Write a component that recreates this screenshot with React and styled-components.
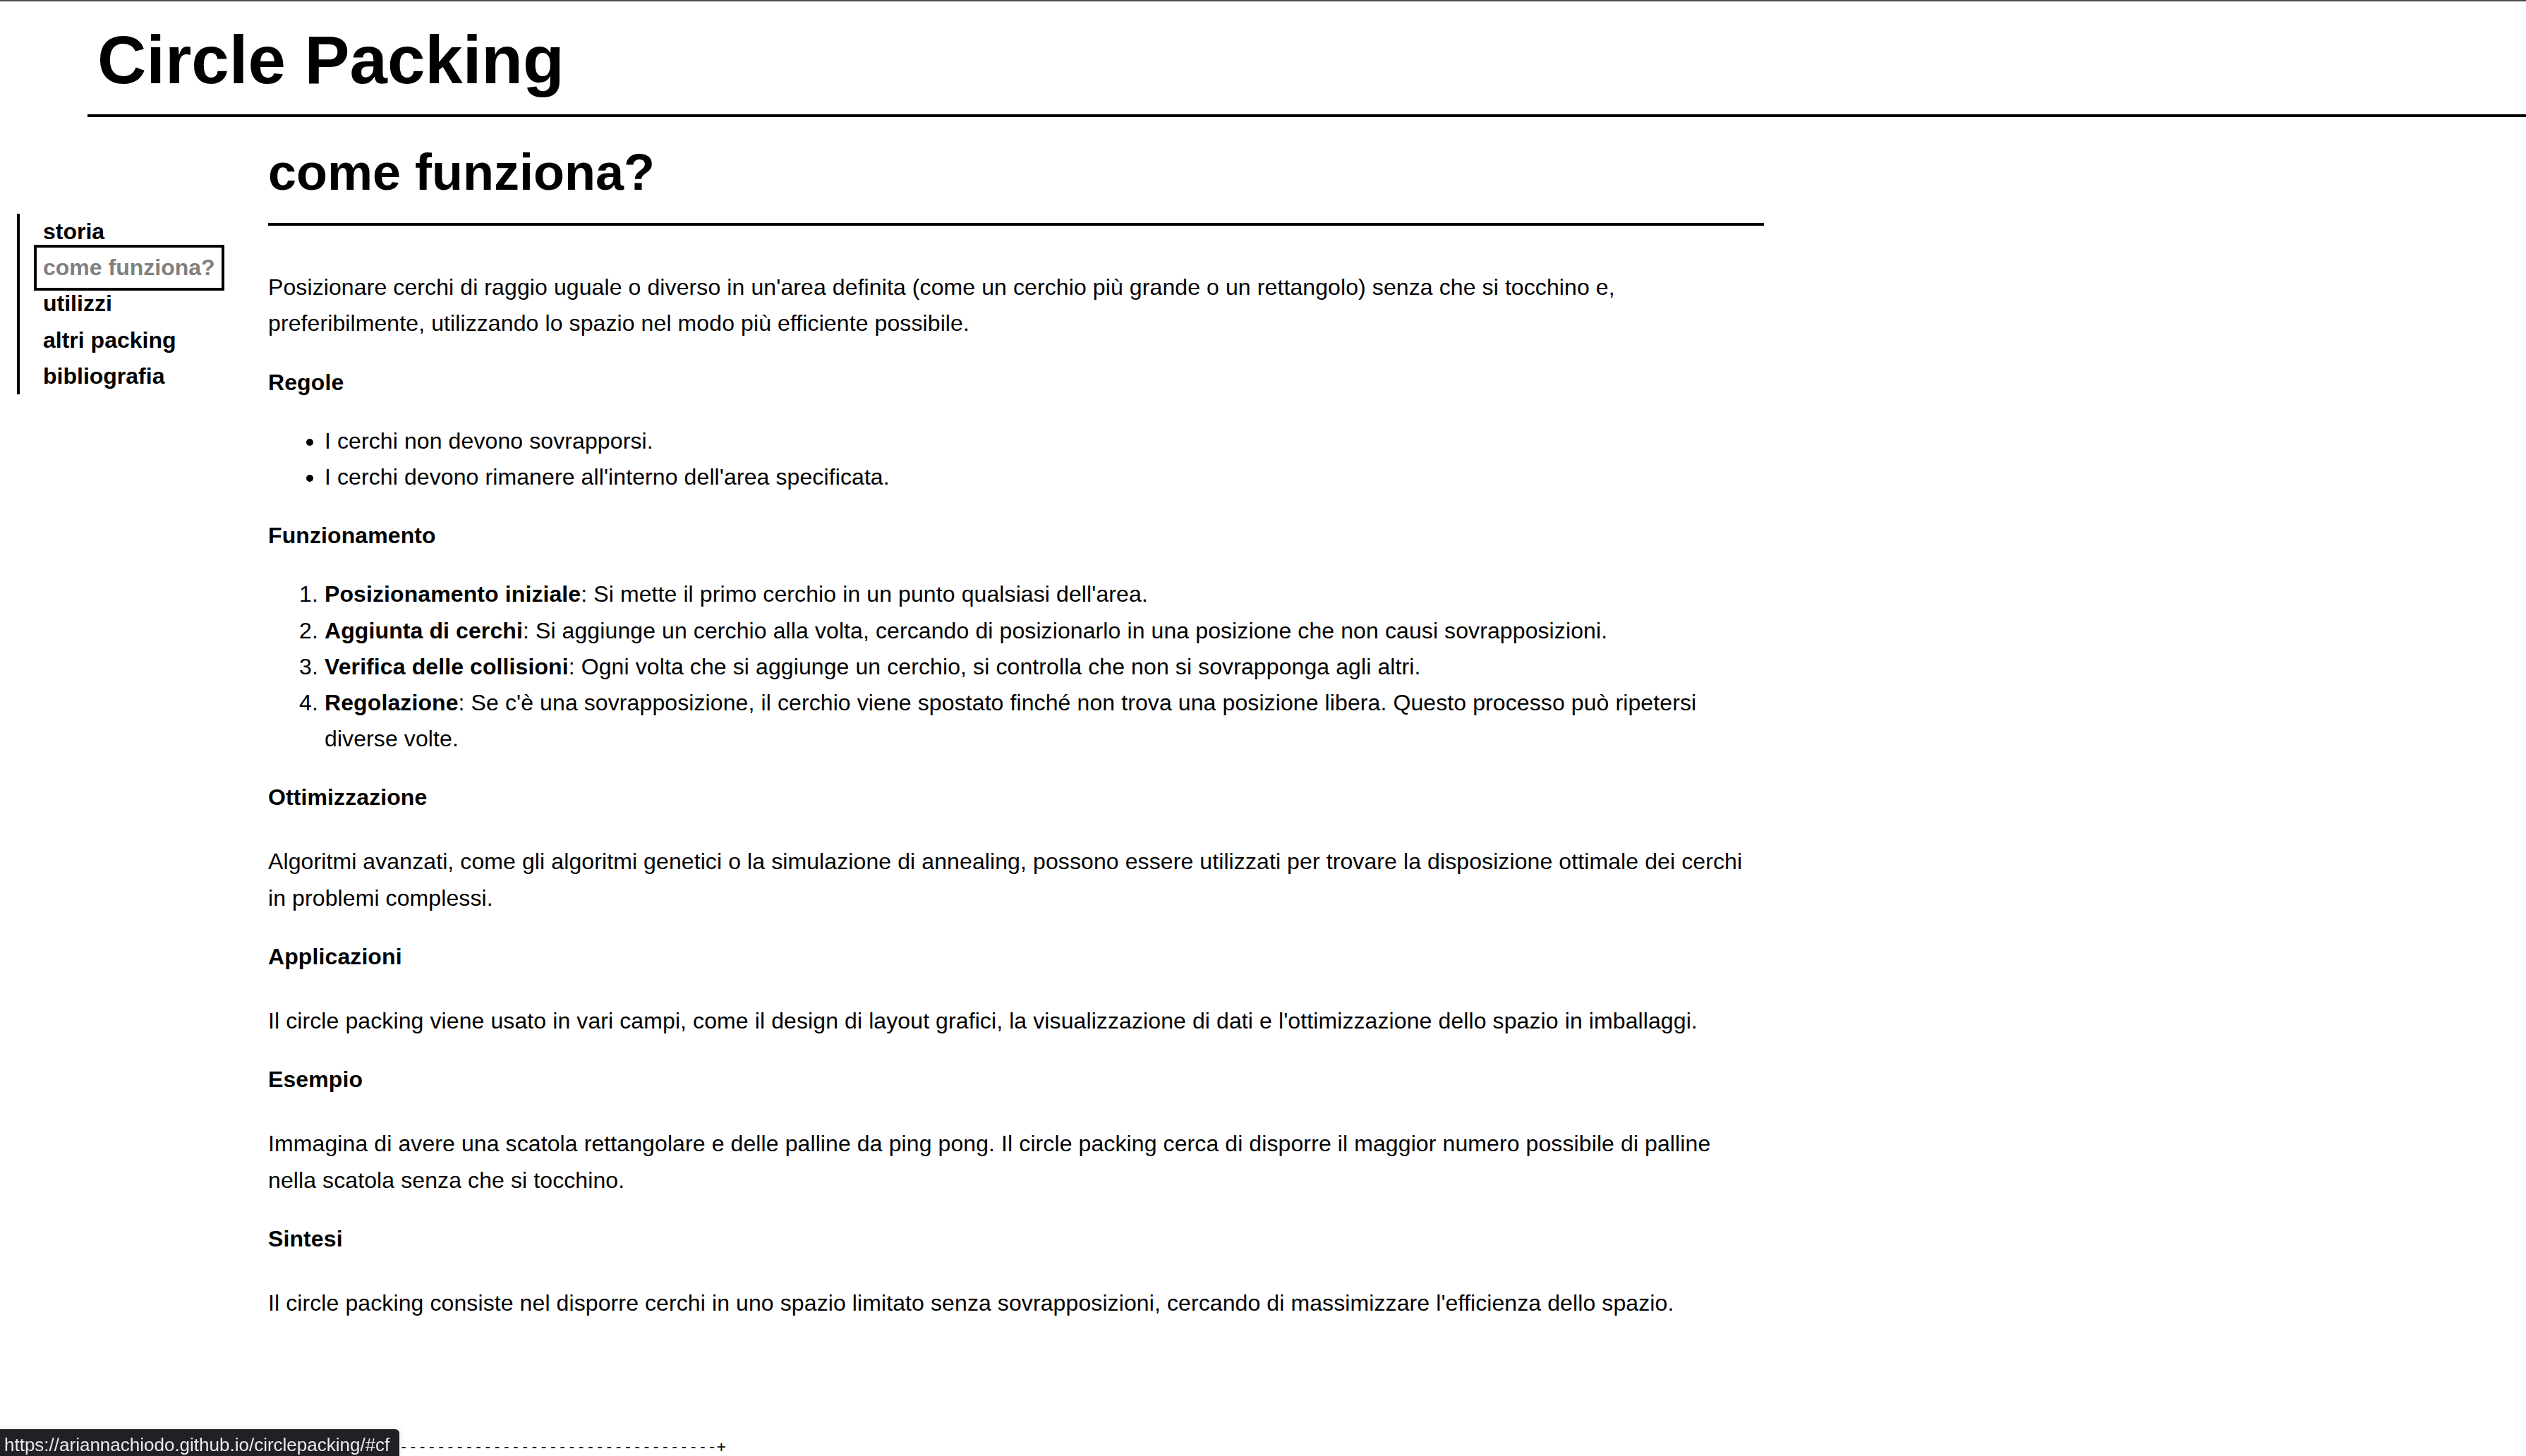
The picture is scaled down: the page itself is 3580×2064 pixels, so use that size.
import React from "react";
import styled, { createGlobalStyle } from "styled-components";

const GlobalStyle = createGlobalStyle`
  html, body {
    margin: 0;
    padding: 0;
    background: #fff;
  }
  body {
    font-family: "Liberation Sans", Arial, Helvetica, sans-serif;
    font-size: 32px;
    line-height: 1.6;
    color: #000;
  }
`;

const navItems = [
  { text: "storia", href: "#storia" },
  { text: "come funziona?", href: "#cf", active: true },
  { text: "utilizzi", href: "#utilizzi" },
  { text: "altri packing", href: "#altri" },
  { text: "bibliografia", href: "#bibliografia" },
];

const rules = [
  "I cerchi non devono sovrapporsi.",
  "I cerchi devono rimanere all'interno dell'area specificata.",
];

const steps = [
  {
    label: "Posizionamento iniziale",
    text: "Si mette il primo cerchio in un punto qualsiasi dell'area.",
  },
  {
    label: "Aggiunta di cerchi",
    text: "Si aggiunge un cerchio alla volta, cercando di posizionarlo in una posizione che non causi sovrapposizioni.",
  },
  {
    label: "Verifica delle collisioni",
    text: "Ogni volta che si aggiunge un cerchio, si controlla che non si sovrapponga agli altri.",
  },
  {
    label: "Regolazione",
    text: "Se c'è una sovrapposizione, il cerchio viene spostato finché non trova una posizione libera. Questo processo può ripetersi diverse volte.",
  },
];

function App() {
  return (
    <Page>
      <GlobalStyle />
      <Header>
        <Title>Circle Packing</Title>
      </Header>
      <Layout>
        <Sidebar>
          <NavList>
            {navItems.map((item) => (
              <li key={item.text}>
                <NavLink href={item.href} $active={item.active}>
                  {item.text}
                </NavLink>
              </li>
            ))}
          </NavList>
        </Sidebar>
        <Main id="cf">
          <PageTitle>come funziona?</PageTitle>
          <Text>
            Posizionare cerchi di raggio uguale o diverso in un'area definita
            (come un cerchio più grande o un rettangolo) senza che si tocchino
            e, preferibilmente, utilizzando lo spazio nel modo più efficiente
            possibile.
          </Text>

          <SectionTitle $after={32}>Regole</SectionTitle>
          <BulletList>
            {rules.map((r) => (
              <li key={r}>{r}</li>
            ))}
          </BulletList>

          <SectionTitle $after={32}>Funzionamento</SectionTitle>
          <StepList>
            {steps.map((s) => (
              <li key={s.label}>
                <strong>{s.label}</strong>: {s.text}
              </li>
            ))}
          </StepList>

          <SectionTitle $after={40}>Ottimizzazione</SectionTitle>
          <Text>
            Algoritmi avanzati, come gli algoritmi genetici o la simulazione di
            annealing, possono essere utilizzati per trovare la disposizione
            ottimale dei cerchi in problemi complessi.
          </Text>

          <SectionTitle $after={40}>Applicazioni</SectionTitle>
          <Text>
            Il circle packing viene usato in vari campi, come il design di
            layout grafici, la visualizzazione di dati e l'ottimizzazione dello
            spazio in imballaggi.
          </Text>

          <SectionTitle $after={40}>Esempio</SectionTitle>
          <Text>
            Immagina di avere una scatola rettangolare e delle palline da ping
            pong. Il circle packing cerca di disporre il maggior numero
            possibile di palline nella scatola senza che si tocchino.
          </Text>

          <SectionTitle $after={40}>Sintesi</SectionTitle>
          <Text>
            Il circle packing consiste nel disporre cerchi in uno spazio
            limitato senza sovrapposizioni, cercando di massimizzare
            l'efficienza dello spazio.
          </Text>

          <Ascii>{"+" + "-".repeat(47) + "+"}</Ascii>
        </Main>
      </Layout>
      <StatusBar>https://ariannachiodo.github.io/circlepacking/#cf</StatusBar>
    </Page>
  );
}

const Page = styled.div`
  border-top: 2px solid #4a4a4a;
  min-height: 2062px;
  overflow: hidden;
`;

const Header = styled.header`
  margin-left: 124px;
  padding: 28px 0 22px;
  border-bottom: 4px solid #000;
`;

const Title = styled.h1`
  margin: 0;
  padding-left: 14px;
  font-size: 96px;
  line-height: 110px;
  font-weight: 700;
`;

const Layout = styled.div`
  display: flex;
  align-items: flex-start;
`;

const Sidebar = styled.nav`
  flex: 0 0 auto;
  width: 319px;
  margin: 137px 0 0 24px;
  padding-left: 33px;
  border-left: 4px solid #000;
`;

const NavList = styled.ul`
  margin: 0;
  padding: 0;
  list-style: none;
`;

const NavLink = styled.a`
  display: inline-block;
  padding: 0 6px;
  margin: 0 -6px;
  font-weight: 700;
  text-decoration: none;
  color: ${(p) => (p.$active ? "#808080" : "#000")};
  outline: ${(p) => (p.$active ? "4px solid #000" : "none")};
  outline-offset: 3px;
`;

const Main = styled.main`
  flex: 0 0 auto;
  width: 2120px;
  padding-top: 21px;
  letter-spacing: 0.1px;
`;

const PageTitle = styled.h2`
  margin: 0 0 62px;
  padding-bottom: 14px;
  border-bottom: 4px solid #000;
  font-size: 72px;
  line-height: 1.6;
  font-weight: 700;
  letter-spacing: 0;
`;

const Text = styled.p`
  margin: 32px 14px 32px 0;
`;

const SectionTitle = styled.h3`
  margin: 32px 0 ${(p) => p.$after}px;
  font-size: 32px;
  font-weight: 700;
`;

const BulletList = styled.ul`
  margin: 32px 14px 32px 0;
  padding-left: 80px;
`;

const StepList = styled.ol`
  margin: 32px 14px 32px 0;
  padding-left: 80px;
`;

const Ascii = styled.pre`
  margin: 160px 0 0;
  font-family: "DejaVu Sans Mono", "Liberation Mono", monospace;
  font-size: 22px;
  line-height: 1.6;
  letter-spacing: 0;
`;

const StatusBar = styled.div`
  position: fixed;
  left: 0;
  bottom: 0;
  box-sizing: border-box;
  height: 38px;
  padding: 6px 14px 0 6px;
  background: #202124;
  color: #e8eaed;
  font-family: "Liberation Sans", Arial, sans-serif;
  font-size: 26px;
  line-height: 33px;
  border-top-right-radius: 6px;
  box-shadow: 0 0 10px rgba(0, 0, 0, 0.12);
  white-space: nowrap;
`;

export default App;
